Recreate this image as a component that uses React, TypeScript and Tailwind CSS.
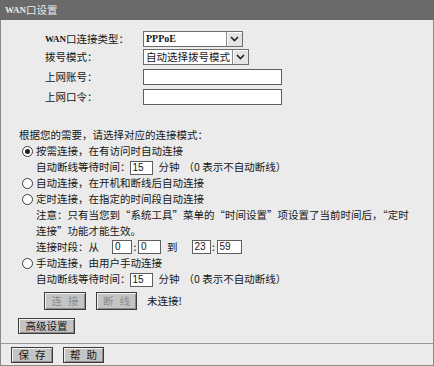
import React from "react";

function Chevron() {
  return (
    <svg width="9" height="6" viewBox="0 0 9 6">
      <path d="M1 1 L4.5 4.5 L8 1" fill="none" stroke="#222" strokeWidth="1.6" />
    </svg>
  );
}

function Select({ text, className, textClass }: { text: string; className: string; textClass?: string }) {
  return (
    <div className={`h-[16px] border border-[#6e6e6e] bg-white flex ${className}`}>
      <span className={`flex-1 pl-[2px] flex items-center leading-none overflow-hidden whitespace-nowrap ${textClass ?? ""}`}>{text}</span>
      <span className="w-[16px] h-full border-l border-[#8a8a8a] bg-[#e4e4e4] flex items-center justify-center shadow-[inset_1px_1px_0_#ffffff]">
        <Chevron />
      </span>
    </div>
  );
}

function Radio({ checked }: { checked?: boolean }) {
  return (
    <span className="w-[11px] h-[11px] rounded-full border border-[#3a3a3a] bg-white flex items-center justify-center shrink-0 ml-[3px] mr-[3px]">
      {checked && <span className="w-[5px] h-[5px] rounded-full bg-[#222]" />}
    </span>
  );
}

function Box({ value, className }: { value: string; className: string }) {
  return (
    <span className={`h-[14px] border border-[#5e5e5e] bg-white flex items-center pl-[2px] text-[10px] font-['Liberation_Sans',sans-serif] leading-none ${className}`}>
      {value}
    </span>
  );
}

function Btn({ a, b, className, disabled }: { a: string; b?: string; className: string; disabled?: boolean }) {
  return (
    <div
      className={`border border-[#3c3c3c] bg-[#c4c4c4] shadow-[inset_1px_1px_0_#f2f2f2,inset_-1px_-1px_0_#8a8a8a] flex items-center justify-center gap-[6px] leading-none whitespace-nowrap ${
        disabled ? "text-[#8c8c8c]" : "text-[#141414]"
      } ${className}`}
    >
      <span>{a}</span>
      {b && <span>{b}</span>}
    </div>
  );
}

export default function App() {
  return (
    <div className="w-[434px] h-[366px] bg-[#ebebeb] flex flex-col text-[#161616] text-[10.5px] font-['Noto_Sans_CJK_SC',sans-serif] leading-none overflow-hidden">
      <div className="h-[20px] shrink-0 bg-[#6a6a6a] text-[#ececec] pl-[5px] flex items-center">
        <span className="font-['Liberation_Serif',serif] text-[9px] font-bold">WAN</span>
        <span>口设置</span>
      </div>
      <div className="flex-1 flex flex-col border-l border-r border-b border-[#8a8a8a]">
        <div className="flex-1 flex flex-col">
          <div className="flex flex-col pl-[44px] pt-[11px]">
            <div className="flex items-center h-[16px]">
              <span className="w-[98px] flex items-center">
                <span className="font-['Liberation_Serif',serif] text-[9px] font-bold">WAN</span>
                <span>口连接类型：</span>
              </span>
              <Select text="PPPoE" className="w-[100px]" textClass="font-['Liberation_Serif',serif] text-[10px] font-bold" />
            </div>
            <div className="flex items-center h-[16px] mt-[2px]">
              <span className="w-[98px]">拨号模式：</span>
              <Select text="自动选择拨号模式" className="w-[106px]" />
            </div>
            <div className="flex items-center h-[16px] mt-[4px]">
              <span className="w-[98px]">上网账号：</span>
              <span className="w-[139px] h-[16px] border border-[#5e5e5e] bg-white" />
            </div>
            <div className="flex items-center h-[16px] mt-[4px]">
              <span className="w-[98px]">上网口令：</span>
              <span className="w-[139px] h-[16px] border border-[#5e5e5e] bg-white" />
            </div>
          </div>

          <div className="flex flex-col pl-[18px] mt-[22px]">
            <div className="h-[16px] flex items-center">根据您的需要，请选择对应的连接模式：</div>
            <div className="h-[16px] flex items-center">
              <Radio checked />
              <span>按需连接，在有访问时自动连接</span>
            </div>
            <div className="h-[16px] flex items-center pl-[17px]">
              <span>自动断线等待时间：</span>
              <Box value="15" className="w-[23px] ml-[-1px] mt-[2px]" />
              <span className="ml-[6px]">分钟</span>
              <span className="ml-[4px]">（0 表示不自动断线）</span>
            </div>
            <div className="h-[16px] flex items-center">
              <Radio />
              <span>自动连接，在开机和断线后自动连接</span>
            </div>
            <div className="h-[16px] flex items-center">
              <Radio />
              <span>定时连接，在指定的时间段自动连接</span>
            </div>
            <div className="h-[16px] flex items-center pl-[17px] whitespace-nowrap">
              注意：只有当您到“系统工具”菜单的“时间设置”项设置了当前时间后，“定时
            </div>
            <div className="h-[16px] flex items-center pl-[17px]">连接”功能才能生效。</div>
            <div className="h-[16px] flex items-center pl-[17px]">
              <span>连接时段：从</span>
              <Box value="0" className="w-[20px] ml-[13px]" />
              <span className="w-[6px] text-center">:</span>
              <Box value="0" className="w-[23px]" />
              <span className="ml-[6px]">到</span>
              <Box value="23" className="w-[19px] ml-[14px]" />
              <span className="w-[6px] text-center">:</span>
              <Box value="59" className="w-[25px]" />
            </div>
            <div className="h-[16px] flex items-center">
              <Radio />
              <span>手动连接，由用户手动连接</span>
            </div>
            <div className="h-[16px] flex items-center pl-[17px]">
              <span>自动断线等待时间：</span>
              <Box value="15" className="w-[23px] ml-[-1px] mt-[2px]" />
              <span className="ml-[6px]">分钟</span>
              <span className="ml-[4px]">（0 表示不自动断线）</span>
            </div>
            <div className="h-[18px] flex items-center mt-[5px] pl-[25px]">
              <Btn disabled a="连" b="接" className="w-[42px] h-[18px]" />
              <Btn disabled a="断" b="线" className="w-[41px] h-[18px] ml-[10px]" />
              <span className="ml-[10px]">未连接!</span>
            </div>
            <div className="mt-[8px] flex">
              <Btn a="高级设置" className="w-[57px] h-[16px] ml-[-1px]" />
            </div>
          </div>
        </div>
        <div className="h-[22px] shrink-0 border-t border-[#9a9a9a] flex pt-[3px] pl-[10px]">
          <Btn a="保" b="存" className="w-[42px] h-[16px]" />
          <Btn a="帮" b="助" className="w-[41px] h-[16px] ml-[10px]" />
        </div>
      </div>
    </div>
  );
}
